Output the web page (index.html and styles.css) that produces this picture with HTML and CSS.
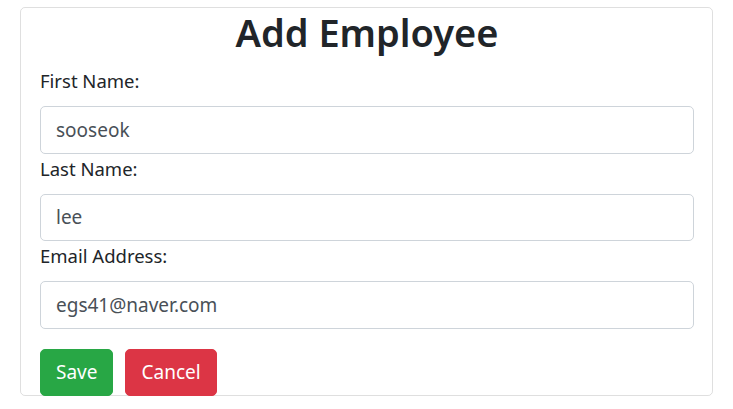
FILE: index.html
```html
<!DOCTYPE html>
<html>
<head>
<meta charset="utf-8">
<link rel="stylesheet" href="styles.css">
</head>
<body>
<div class="page">
  <div class="card">
    <h2 class="title">Add Employee</h2>
    <form class="form">
      <div class="group">
        <label>First Name:</label>
        <input class="control" type="text" value="sooseok">
      </div>
      <div class="group">
        <label>Last Name:</label>
        <input class="control" type="text" value="lee">
      </div>
      <div class="group">
        <label>Email Address:</label>
        <input class="control" type="text" value="egs41@naver.com">
      </div>
      <div class="actions">
        <button type="button" class="btn btn-save">Save</button>
        <button type="button" class="btn btn-cancel">Cancel</button>
      </div>
    </form>
  </div>
</div>
</body>
</html>
```
FILE: styles.css
```css
* { box-sizing: border-box; }
html, body { margin: 0; padding: 0; background: #fff; }
body {
  font-family: "Noto Sans", "Open Sans", sans-serif;
  font-size: 18.5px;
  line-height: 30px;
  color: #212529;
}
.page { padding: 7px 20px 0 20px; }
.card {
  border: 1px solid rgba(0,0,0,.125);
  border-radius: 5px;
  padding: 0 18px 0 19px;
  height: 389px;
}
.title {
  margin: 0 0 10px 0;
  font-size: 38px;
  line-height: 48px;
  font-weight: 600;
  text-align: center;
}
.form { display: flex; flex-direction: column; }
.group { display: flex; flex-direction: column; }
.group label {
  display: block;
  margin-bottom: 10px;
  line-height: 30px;
}
.control {
  display: block;
  width: 100%;
  height: 47.5px;
  padding: 7.5px 15px;
  font: inherit;
  font-size: 19px;
  line-height: 30px;
  color: #495057;
  background: #fff;
  border: 1px solid #ced4da;
  border-radius: 5px;
}
.actions { display: flex; gap: 12px; margin-top: 20px; }
.btn {
  font: inherit;
  font-size: 19px;
  line-height: 30px;
  height: 47.5px;
  padding: 7.5px 15px;
  border: 1px solid transparent;
  border-radius: 5px;
  color: #fff;
  cursor: pointer;
}
.btn-save { background: #28a745; border-color: #28a745; }
.btn-cancel { background: #dc3545; border-color: #dc3545; }
```
